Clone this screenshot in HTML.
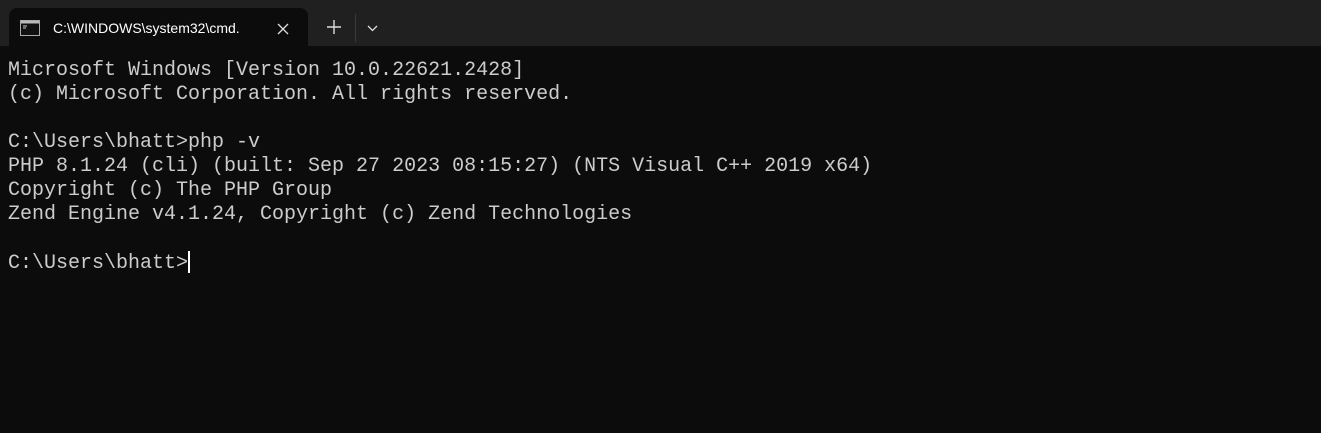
<!DOCTYPE html>
<html><head><style>
html,body{margin:0;padding:0;width:1321px;height:433px;overflow:hidden;background:#0c0c0c;}
.bar{position:absolute;left:0;top:0;width:1321px;height:46px;background:#202020;}
.tab{position:absolute;left:9px;top:8px;width:299px;height:38px;background:#0c0c0c;border-radius:8px 8px 0 0;}
.tab .t{position:absolute;left:44px;top:12px;font:14px "Liberation Sans",sans-serif;color:#fff;}
.plus{position:absolute;left:327px;top:20px;}
.sep{position:absolute;left:355px;top:14px;width:1px;height:28px;background:#3a3a3a;}
.chev{position:absolute;left:367px;top:25px;}
pre{position:absolute;left:8px;top:59px;margin:0;font:20px/24px "Liberation Mono",monospace;color:#cccccc;}
.cur{display:inline-block;width:2px;height:22px;background:#fff;vertical-align:-5px;}
</style></head><body>
<div class="bar"></div>
<div class="tab">
<svg style="position:absolute;left:11px;top:12px" width="20" height="16" viewBox="0 0 20 16"><rect x="0.5" y="0.5" width="19" height="15" fill="#111" stroke="#aaa"/><rect x="1" y="1" width="18" height="2.5" fill="#bbb"/><path d="M3 6h4M3 8h3" stroke="#ccc" stroke-width="1"/></svg>
<div class="t">C:\WINDOWS\system32\cmd.</div>
<svg width="12" height="12" viewBox="0 0 12 12" style="position:absolute;left:268px;top:15px"><path d="M1 1L11 11M11 1L1 11" stroke="#ddd" stroke-width="1.3"/></svg>
</div>
<svg class="plus" width="14" height="14" viewBox="0 0 14 14"><path d="M7 0V14M0 7H14" stroke="#ddd" stroke-width="1.4"/></svg>
<div class="sep"></div>
<svg class="chev" width="11" height="7" viewBox="0 0 11 7"><path d="M1 1L5.5 5.5L10 1" stroke="#ddd" stroke-width="1.3" fill="none"/></svg>
<pre>Microsoft Windows [Version 10.0.22621.2428]
(c) Microsoft Corporation. All rights reserved.

C:\Users\bhatt&gt;php -v
PHP 8.1.24 (cli) (built: Sep 27 2023 08:15:27) (NTS Visual C++ 2019 x64)
Copyright (c) The PHP Group
Zend Engine v4.1.24, Copyright (c) Zend Technologies

C:\Users\bhatt&gt;<span class="cur"></span></pre>
</body></html>
